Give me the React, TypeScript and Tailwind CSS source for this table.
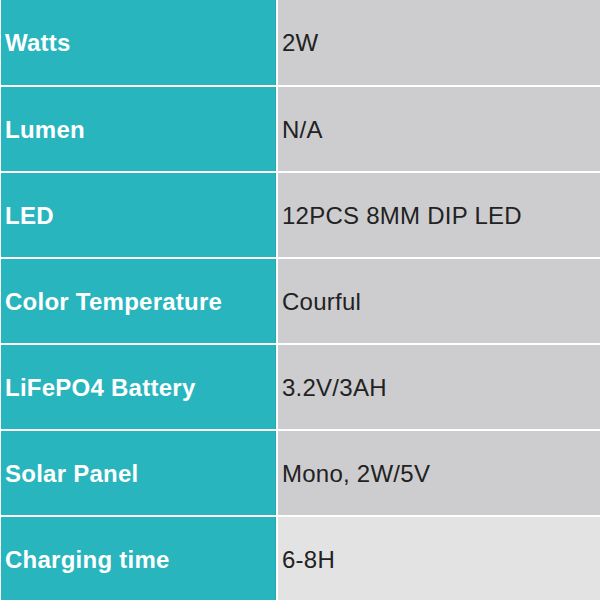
const specs = [
  { label: "Watts", value: "2W" },
  { label: "Lumen", value: "N/A" },
  { label: "LED", value: "12PCS 8MM DIP LED" },
  { label: "Color Temperature", value: "Courful" },
  { label: "LiFePO4 Battery", value: "3.2V/3AH" },
  { label: "Solar Panel", value: "Mono, 2W/5V" },
  { label: "Charging time", value: "6-8H" },
];

export default function App() {
  return (
    <div
      className="w-[600px] h-[600px] overflow-hidden bg-white pl-[1px]"
      style={{ fontFamily: '"Liberation Sans", Arial, sans-serif' }}
    >
      <div className="grid grid-cols-[275px_1fr] grid-rows-[85px_repeat(6,84px)] gap-[2px]">
        {specs.map((s, i) => {
          const last = i === specs.length - 1;
          return [
            <div
              key={s.label + "-l"}
              className="flex items-center bg-[#28b5bd] border-r border-[#22a9b1] pl-1 pt-[1px] text-[24px] tracking-[0.25px] font-bold text-white"
            >
              {s.label}
            </div>,
            <div
              key={s.label + "-r"}
              className={`flex items-center pl-1 pt-[1px] text-[24px] tracking-[0.25px] text-[#222] ${last ? "bg-[#e3e3e3]" : "bg-[#cdcdcf]"}`}
            >
              {s.value}
            </div>,
          ];
        })}
      </div>
    </div>
  );
}
